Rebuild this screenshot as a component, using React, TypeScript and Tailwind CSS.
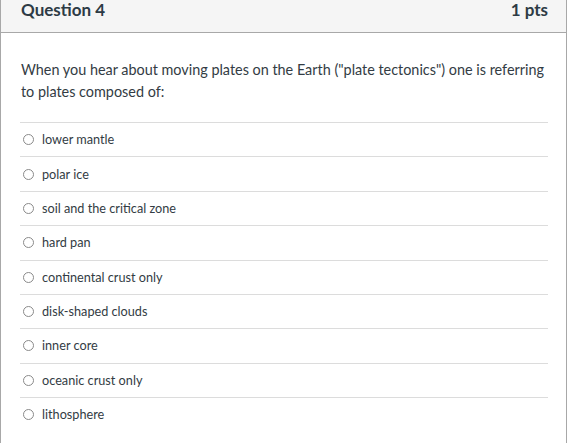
const ANSWERS = [
  "lower mantle",
  "polar ice",
  "soil and the critical zone",
  "hard pan",
  "continental crust only",
  "disk-shaped clouds",
  "inner core",
  "oceanic crust only",
  "lithosphere",
];

function Answer({ label }: { label: string }) {
  return (
    <li className="flex h-[34.375px] items-center border-t border-[#dcdcdc]">
      <span className="ml-[3px] h-[11px] w-[11px] shrink-0 rounded-full border border-[#8a8a8a] bg-white" />
      <span className="ml-[8px] text-[12.7px] text-[#333c44]">{label}</span>
    </li>
  );
}

export default function App() {
  return (
    <div className="h-[443px] w-[577px] overflow-hidden bg-white font-['Lato',sans-serif]">
      <div className="h-[443px] w-[567px] border-x border-[#a8a8a8] bg-white">
        <div className="flex h-[33px] justify-between border-b border-[#a8a8a8] bg-[#f5f5f5] pl-[20px] pr-[18px] text-[17px] font-bold leading-[20px] text-[#2d3b45]">
          <span>Question 4</span>
          <span>1 pts</span>
        </div>
        <div className="pl-[20px] pr-[18px] pt-[26px]">
          <p className="text-[14.4px] leading-[22px] text-[#333c44]">
            When you hear about moving plates on the Earth ("plate tectonics") one is referring to
            plates composed of:
          </p>
          <ul className="-ml-[1px] mt-[19px]">
            {ANSWERS.map((a) => (
              <Answer key={a} label={a} />
            ))}
          </ul>
        </div>
      </div>
    </div>
  );
}
